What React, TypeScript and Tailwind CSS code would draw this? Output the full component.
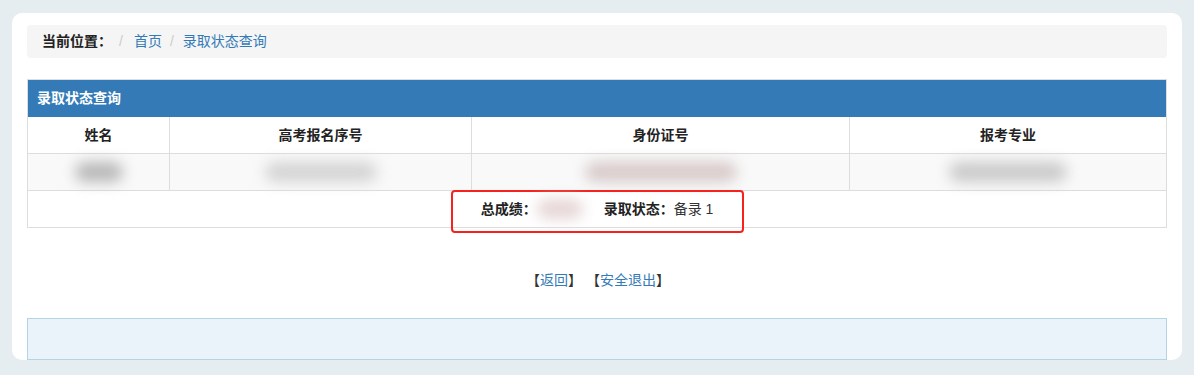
import React from 'react';

const cols = ['w-[142px]', 'w-[302px]', 'w-[378px]', 'flex-1'];
const headers = ['姓名', '高考报名序号', '身份证号', '报考专业'];

// blurred (redacted) values in the data row
const blurs = [
  'w-[48px] bg-[#b8b8b8]',
  'w-[112px] bg-[#d4d4d4]',
  'w-[152px] bg-[#d8caca]',
  'w-[118px] bg-[#cacaca]',
];

function Blur({ className }: { className: string }) {
  return <span className={`inline-block h-[20px] rounded-full blur-[7px] ${className}`} />;
}

export default function App() {
  return (
    <div
      className="h-[375px] overflow-hidden bg-[#e5edf0] px-[12px] pt-[13px] text-[14px] text-[#333]"
      style={{ fontFamily: '"Liberation Sans", "Noto Sans CJK SC", sans-serif' }}
    >
      <div className="flex h-[347px] flex-col overflow-hidden rounded-[10px] bg-white px-[15px] pt-[12px]">
        {/* breadcrumb */}
        <div className="flex h-[35px] items-center rounded-[4px] bg-[#f5f5f5] pl-[15px]">
          <span className="font-bold text-[#222]">当前位置：</span>
          <span className="ml-[2px] pl-[5px] pr-[11px] text-[#ccc]">/</span>
          <a className="text-[#337ab7]">首页</a>
          <span className="pl-[8px] pr-[9px] text-[#ccc]">/</span>
          <a className="text-[#337ab7]">录取状态查询</a>
        </div>

        {/* result table */}
        <div className="mt-[21px] border border-[#ddd]">
          <div className="flex h-[37px] items-center bg-[#337ab7] pl-[9px] font-bold text-white">录取状态查询</div>
          <div className="flex h-[37px] border-b border-[#ddd] font-bold text-[#222]">
            {headers.map((h, i) => (
              <div key={h} className={`${cols[i]} flex items-center justify-center ${i < 3 ? 'border-r border-[#ddd]' : ''}`}>
                {h}
              </div>
            ))}
          </div>
          <div className="flex h-[37px] border-b border-[#ddd] bg-[#f9f9f9]">
            {blurs.map((b, i) => (
              <div key={i} className={`${cols[i]} flex items-center justify-center ${i < 3 ? 'border-r border-[#ddd]' : ''}`}>
                <Blur className={b} />
              </div>
            ))}
          </div>
          <div className="flex h-[36px] items-center justify-center">
            <span className="relative inline-flex h-full items-center">
              <span className="pointer-events-none absolute -top-[1px] -bottom-[6px] -left-[30px] -right-[31px] rounded-[4px] border-2 border-[#f5221e]" />
              <span className="font-bold text-[#222]">总成绩：</span>
              <Blur className="w-[46px] bg-[#e6d6d6]" />
              <span className="ml-[21px] font-bold text-[#222]">录取状态：</span>
              <span>备录 1</span>
            </span>
          </div>
        </div>

        {/* actions */}
        <div className="mt-[42px] flex justify-center pl-[2px]">
          <span>【<a className="text-[#337ab7]">返回</a>】</span>
          <span className="ml-[4px]">【<a className="text-[#337ab7]">安全退出</a>】</span>
        </div>

        <div className="mt-[27px] h-[42px] shrink-0 border border-[#b1d4e6] bg-[#ebf3fa]" />
      </div>
    </div>
  );
}
